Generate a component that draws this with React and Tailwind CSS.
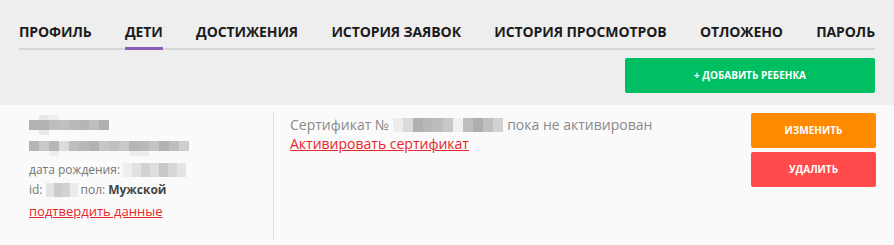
const tabs = ['ПРОФИЛЬ', 'ДЕТИ', 'ДОСТИЖЕНИЯ', 'ИСТОРИЯ ЗАЯВОК', 'ИСТОРИЯ ПРОСМОТРОВ', 'ОТЛОЖЕНО', 'ПАРОЛЬ'];

// pixelated (blurred) private data
function Mosaic({ rows, cell = 10 }) {
    return (
        <div className="inline-flex flex-col align-middle">
            {rows.map((row, i) => (
                <div key={i} className="flex">
                    {row.map((c, j) => (
                        <div key={j} style={{ width: cell, height: i === 0 || i === rows.length - 1 ? cell / 2 : cell, background: c }} />
                    ))}
                </div>
            ))}
        </div>
    );
}

const g = (v) => `rgb(${v},${v},${v})`;

export default function App() {
    return (
        <div className="w-[894px] h-[245px] bg-[#eeeeee] overflow-hidden" style={{ fontFamily: '"Open Sans", sans-serif' }}>
            <div className="px-[19px]">
                <nav className="flex justify-between items-end border-b-2 border-[#d6d6d6] pt-[22px] w-[856px]">
                    {tabs.map((t) => (
                        <div key={t} className={`text-[14px] font-bold text-[#1b1b1b] leading-[20px] tracking-[-0.1px] pb-[5px] -mb-[2px] border-b-[3px] ${t === 'ДЕТИ' ? 'border-[#8a5cb4]' : 'border-transparent'}`}>
                            {t}
                        </div>
                    ))}
                </nav>
                <div className="flex justify-end pt-[8px] pb-[12px] w-[856px]">
                    <button className="w-[250px] h-[35px] bg-[#00bf63] rounded-[2px] text-white text-[10px] font-bold">+ ДОБАВИТЬ РЕБЕНКА</button>
                </div>
            </div>
            <div className="bg-[#fafafa] h-[140px] flex pl-[29px] pt-[8px]">
                <div className="w-[244px] pt-[1px] text-[12px] text-[#777] leading-[20px]">
                    <Mosaic rows={[
                        [g(250), g(232), g(238), g(250), g(250), g(250), g(250), g(250)],
                        [g(178), g(178), g(190), g(192), g(186), g(182), g(190), g(176)],
                        [g(250), g(232), g(250), g(250), g(250), g(250), g(250), g(250)],
                    ]} />
                    <div>
                        <Mosaic rows={[
                            [g(250), g(250), g(250), g(250), g(250), g(250), g(250), g(250), g(250), g(250), g(250), g(250), g(250), g(250), g(250), g(250)],
                            [g(180), g(200), g(182), g(220), g(190), g(184), g(178), g(198), g(192), g(200), g(180), g(184), g(196), g(178), g(190), g(206)],
                            [g(250), g(250), g(238), g(250), g(250), g(250), g(250), g(250), g(250), g(250), g(236), g(236), g(250), g(250), g(250), g(250)],
                        ]} />
                    </div>
                    <div className="mt-[4px] flex items-center">дата рождения:<span className="ml-[3px] inline-flex">
                        {[238, 226, 210, 222, 200, 216, 228].map((v, i) => <span key={i} style={{ width: 9, height: 14, background: g(v) }} />)}
                    </span></div>
                    <div className="flex items-center">id:<span className="mx-[3px] inline-flex">
                        {[228, 204, 210, 236].map((v, i) => <span key={i} style={{ width: 8, height: 14, background: g(v) }} />)}
                    </span>пол: <span className="ml-[3px] font-bold text-[#444]">Мужской</span></div>
                    <a className="block mt-[1px] text-[13px] text-[#e8262b] underline">подтвердить данные</a>
                </div>
                <div className="border-l border-[#dcdcdc] mb-[5px] pl-[16px] pt-[2px] flex-1 text-[14px] leading-[19px]">
                    <div className="text-[#8a8a8a] flex items-center">Сертификат №
                        <span className="mx-[4px] inline-flex">
                            {[236, 218, 176, 184, 188, 200, 240, 190, 174, 192, 210].map((v, i) => <span key={i} style={{ width: 10, height: 14, background: g(v) }} />)}
                        </span>
                        пока не активирован
                    </div>
                    <a className="text-[#e8262b] underline">Активировать сертификат</a>
                </div>
                <div className="w-[143px] flex flex-col gap-[4px] pr-[18px]">
                    <button className="h-[35px] bg-[#ff8a00] rounded-[2px] text-white text-[10px] font-bold">ИЗМЕНИТЬ</button>
                    <button className="h-[35px] bg-[#ff4b4b] rounded-[2px] text-white text-[10px] font-bold">УДАЛИТЬ</button>
                </div>
            </div>
        </div>
    );
}
